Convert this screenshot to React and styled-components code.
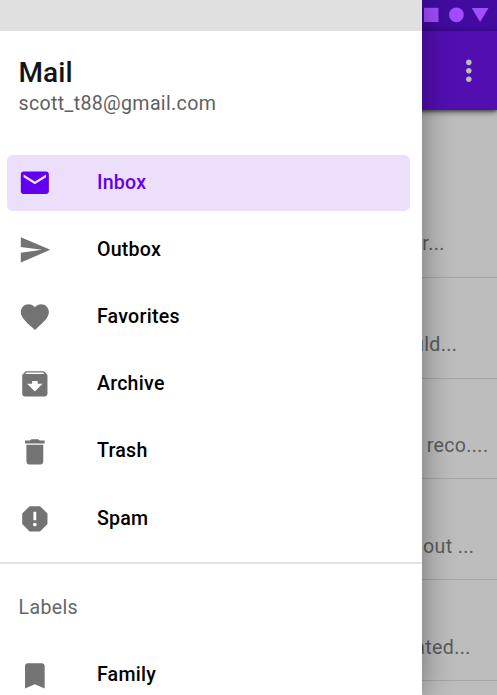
import React from 'react';
import styled, { createGlobalStyle } from 'styled-components';
import {
  MdMail,
  MdSend,
  MdFavorite,
  MdArchive,
  MdDelete,
  MdReport,
  MdBookmark,
  MdMoreVert,
} from 'react-icons/md';

const GlobalStyle = createGlobalStyle`
  * { box-sizing: border-box; }
  body { margin: 0; overflow: hidden; font-family: Roboto, "Noto Sans", sans-serif; }
`;

const Screen = styled.div`
  position: relative;
  width: 497px;
  height: 695px;
  overflow: hidden;
  background: #bdbdbd;
`;

const StatusBar = styled.div`
  display: flex;
  justify-content: flex-end;
  height: 31.4px;
  padding: 7px 7px 0 0;
  background: #420ba0;
`;

const StatusGlyphs = styled.svg`
  width: 67px;
  height: 16px;
  fill: #a24dff;
`;

const AppBar = styled.header`
  position: relative;
  display: flex;
  align-items: center;
  justify-content: flex-end;
  height: 78.6px;
  padding-right: 11px;
  background: #530eb2;
  box-shadow: 0 2px 6px rgba(0, 0, 0, 0.5), 0 1px 3px rgba(0, 0, 0, 0.4);
  color: #bdbdbd;
`;

const MessageList = styled.main`
  padding-top: 67.1px;
`;

const Message = styled.div`
  display: flex;
  align-items: flex-end;
  justify-content: flex-end;
  height: 100.8px;
  padding: 0 ${(p) => p.$end}px 20.4px 0;
  border-bottom: 1.4px solid #a6a6a6;
  color: #5b5b5b;
  font-size: 19.6px;
  line-height: 24px;
  letter-spacing: 0.35px;
  white-space: pre;
`;

const Drawer = styled.aside`
  position: absolute;
  top: 0;
  left: 0;
  display: flex;
  flex-direction: column;
  width: 422px;
  height: 100%;
  background: #fff;
  box-shadow: 0 0 30px rgba(0, 0, 0, 0.42);
`;

const DrawerInset = styled.div`
  flex: none;
  height: 31.4px;
  background: #e0e0e0;
`;

const DrawerHeader = styled.header`
  flex: none;
  height: 119.8px;
  padding: 25px 18.5px 0;
`;

const Title = styled.h1`
  margin: 0;
  color: #141414;
  font-size: 28px;
  font-weight: 500;
  line-height: 34px;
  letter-spacing: 0.1px;
`;

const Account = styled.div`
  padding-top: 1px;
  color: #5f5f5f;
  font-size: 19.6px;
  line-height: 26px;
  letter-spacing: 0.33px;
`;

const NavList = styled.nav`
  display: flex;
  flex-direction: column;
  flex: none;
  gap: 11.15px;
  padding: ${(p) => p.$top}px 11.7px 0 7px;
`;

const NavItem = styled.a`
  display: flex;
  align-items: center;
  gap: 44.9px;
  height: 56px;
  padding-left: 11.3px;
  border-radius: 5.6px;
  background: ${(p) => (p.$active ? '#ecdffc' : 'transparent')};
  color: ${(p) => (p.$active ? '#6200ee' : '#000')};
  font-size: 19.6px;
  font-weight: 500;
  letter-spacing: 0.26px;

  svg {
    flex: none;
    color: ${(p) => (p.$active ? '#6200ee' : '#737373')};
  }
`;

const NavText = styled.span`
  padding-bottom: 0.9px;
`;

const Divider = styled.hr`
  flex: none;
  width: 100%;
  height: 2px;
  margin: 15.4px 0 0;
  border: 0;
  background: #e3e3e3;
`;

const SectionLabel = styled.h2`
  flex: none;
  margin: 0;
  padding: 31px 18.5px 0;
  color: #666;
  font-size: 19.6px;
  font-weight: 400;
  line-height: 26px;
  letter-spacing: 0.35px;
`;

const mailboxes = [
  { name: 'Inbox', icon: MdMail, active: true },
  { name: 'Outbox', icon: MdSend },
  { name: 'Favorites', icon: MdFavorite },
  { name: 'Archive', icon: MdArchive },
  { name: 'Trash', icon: MdDelete },
  { name: 'Spam', icon: MdReport },
];

const messages = [
  { text: 'r...', end: 52.3 },
  { text: 'uld...', end: 39.8 },
  { text: 'reco....', end: 8.6 },
  { text: 'out ...', end: 22.8 },
  { text: 'ated...', end: 26.2 },
];

function NavRow({ name, icon: Icon, active }) {
  return (
    <NavItem $active={active}>
      <Icon size={33.7} />
      <NavText>{name}</NavText>
    </NavItem>
  );
}

export default function App() {
  return (
    <>
      <GlobalStyle />
      <Screen>
        <StatusBar>
          <StatusGlyphs viewBox="0 0 67 16">
            <rect x="1" y="0.8" width="14.5" height="14.2" />
            <circle cx="33.4" cy="7.8" r="7.4" />
            <path d="M48.7 1H65.5L57.1 15Z" />
          </StatusGlyphs>
        </StatusBar>
        <AppBar>
          <MdMoreVert size={33.7} />
        </AppBar>
        <MessageList>
          {messages.map((m) => (
            <Message key={m.text} $end={m.end}>{m.text}</Message>
          ))}
        </MessageList>
        <Drawer>
          <DrawerInset />
          <DrawerHeader>
            <Title>Mail</Title>
            <Account>scott_t88@gmail.com</Account>
          </DrawerHeader>
          <NavList $top={3.7}>
            {mailboxes.map((m) => (
              <NavRow key={m.name} {...m} />
            ))}
          </NavList>
          <Divider />
          <SectionLabel>Labels</SectionLabel>
          <NavList $top={26.4}>
            <NavRow name="Family" icon={MdBookmark} />
          </NavList>
        </Drawer>
      </Screen>
    </>
  );
}
